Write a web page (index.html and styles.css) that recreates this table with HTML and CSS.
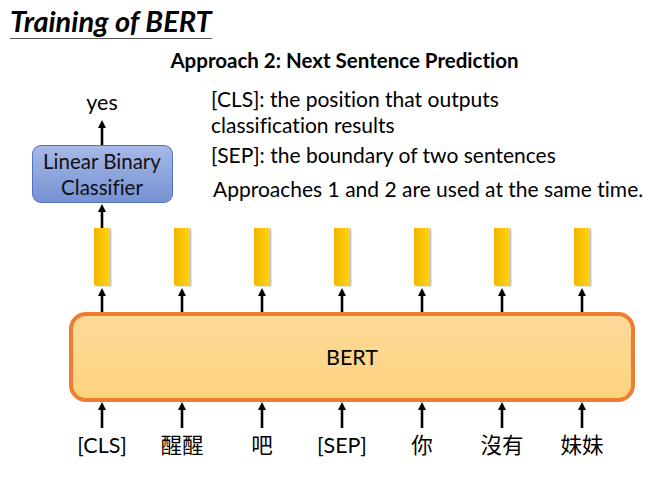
FILE: index.html
```html
<!DOCTYPE html>
<html>
<head>
<meta charset="utf-8">
<link rel="stylesheet" href="styles.css">
</head>
<body>
<div class="page">
  <div class="title"><span>Training of BERT</span></div>
  <div class="subtitle">Approach 2: Next Sentence Prediction</div>
  <div class="top">
    <div class="head">
      <div class="yes">yes</div>
      <svg class="arrow a-up" width="10" height="25" viewBox="0 0 10 25"><line x1="5" y1="6" x2="5" y2="25"/><polygon points="5,0 9,8 1,8"/></svg>
      <div class="clf">Linear Binary<br>Classifier</div>
      <svg class="arrow a-mid" width="10" height="25" viewBox="0 0 10 25"><line x1="5" y1="6" x2="5" y2="25"/><polygon points="5,1 9,9 1,9"/></svg>
    </div>
    <div class="notes">
      <p class="n1">[CLS]: the position that outputs<br>classification results</p>
      <p class="n2">[SEP]: the boundary of two sentences</p>
      <p class="n3">Approaches 1 and 2 are used at the same time.</p>
    </div>
  </div>
  <div class="cols outs">
    <div class="col"><div class="bar"></div><svg class="arrow" width="10" height="27" viewBox="0 0 10 27"><line x1="5" y1="8" x2="5" y2="27"/><polygon points="5,3 9,11 1,11"/></svg></div>
    <div class="col"><div class="bar"></div><svg class="arrow" width="10" height="27" viewBox="0 0 10 27"><line x1="5" y1="8" x2="5" y2="27"/><polygon points="5,3 9,11 1,11"/></svg></div>
    <div class="col"><div class="bar"></div><svg class="arrow" width="10" height="27" viewBox="0 0 10 27"><line x1="5" y1="8" x2="5" y2="27"/><polygon points="5,3 9,11 1,11"/></svg></div>
    <div class="col"><div class="bar"></div><svg class="arrow" width="10" height="27" viewBox="0 0 10 27"><line x1="5" y1="8" x2="5" y2="27"/><polygon points="5,3 9,11 1,11"/></svg></div>
    <div class="col"><div class="bar"></div><svg class="arrow" width="10" height="27" viewBox="0 0 10 27"><line x1="5" y1="8" x2="5" y2="27"/><polygon points="5,3 9,11 1,11"/></svg></div>
    <div class="col"><div class="bar"></div><svg class="arrow" width="10" height="27" viewBox="0 0 10 27"><line x1="5" y1="8" x2="5" y2="27"/><polygon points="5,3 9,11 1,11"/></svg></div>
    <div class="col"><div class="bar"></div><svg class="arrow" width="10" height="27" viewBox="0 0 10 27"><line x1="5" y1="8" x2="5" y2="27"/><polygon points="5,3 9,11 1,11"/></svg></div>
  </div>
  <div class="bert">BERT</div>
  <div class="cols ins">
    <div class="col"><svg class="arrow" width="10" height="26" viewBox="0 0 10 26"><line x1="5" y1="5" x2="5" y2="26"/><polygon points="5,0 9,8 1,8"/></svg><span class="tok">[CLS]</span></div>
    <div class="col"><svg class="arrow" width="10" height="26" viewBox="0 0 10 26"><line x1="5" y1="5" x2="5" y2="26"/><polygon points="5,0 9,8 1,8"/></svg><span class="tok">醒醒</span></div>
    <div class="col"><svg class="arrow" width="10" height="26" viewBox="0 0 10 26"><line x1="5" y1="5" x2="5" y2="26"/><polygon points="5,0 9,8 1,8"/></svg><span class="tok">吧</span></div>
    <div class="col"><svg class="arrow" width="10" height="26" viewBox="0 0 10 26"><line x1="5" y1="5" x2="5" y2="26"/><polygon points="5,0 9,8 1,8"/></svg><span class="tok">[SEP]</span></div>
    <div class="col"><svg class="arrow" width="10" height="26" viewBox="0 0 10 26"><line x1="5" y1="5" x2="5" y2="26"/><polygon points="5,0 9,8 1,8"/></svg><span class="tok">你</span></div>
    <div class="col"><svg class="arrow" width="10" height="26" viewBox="0 0 10 26"><line x1="5" y1="5" x2="5" y2="26"/><polygon points="5,0 9,8 1,8"/></svg><span class="tok">沒有</span></div>
    <div class="col"><svg class="arrow" width="10" height="26" viewBox="0 0 10 26"><line x1="5" y1="5" x2="5" y2="26"/><polygon points="5,0 9,8 1,8"/></svg><span class="tok">妹妹</span></div>
  </div>
</div>
</body>
</html>
```
FILE: styles.css
```css
html, body {
  margin: 0;
  padding: 0;
  background: #ffffff;
}
body {
  font-family: Lato, "Noto Sans CJK TC", sans-serif;
  font-variant-ligatures: none;
  font-feature-settings: "liga" 0, "clig" 0, "dlig" 0;
  color: #000000;
  width: 653px;
  height: 489px;
  overflow: hidden;
}
.page {
  width: 653px;
}
.title {
  padding-left: 10px;
  height: 39px;
}
.title span {
  display: inline-block;
  padding-top: 4px;
  font-size: 29px;
  line-height: 34px;
  font-weight: 700;
  font-style: italic;
  border-bottom: 1px solid #555555;
}
.subtitle {
  margin-top: 9px;
  font-size: 20.5px;
  line-height: 24px;
  font-weight: 700;
  text-align: center;
  padding-left: 36px;
}
.top {
  display: flex;
  align-items: flex-start;
}
.head {
  margin-left: 32px;
  width: 140px;
  display: flex;
  flex-direction: column;
  align-items: center;
}
.yes {
  padding-top: 18px;
  font-size: 21.5px;
  line-height: 24px;
}
.arrow line {
  stroke: #000000;
  stroke-width: 2.6;
}
.arrow polygon {
  fill: #000000;
}
.a-up {
  margin-top: 6px;
  display: block;
}
.a-mid {
  display: block;
}
.clf {
  box-sizing: border-box;
  width: 141px;
  height: 58px;
  border: 1px solid #4f74c0;
  border-radius: 9px;
  background: linear-gradient(to bottom, #a7b8e6, #7592d4);
  font-size: 20.5px;
  line-height: 26px;
  text-align: center;
  padding-top: 2px;
  color: #111111;
}
.notes {
  margin-left: 39px;
  padding-top: 14px;
  font-size: 21px;
  line-height: 26px;
}
.notes p {
  margin: 0;
}
.n2 {
  margin-top: 4px !important;
}
.n3 {
  margin-top: 8px !important;
  padding-left: 2px;
}
.cols {
  display: flex;
  margin-left: 62px;
}
.col {
  width: 80px;
  display: flex;
  flex-direction: column;
  align-items: center;
}
.col .arrow {
  display: block;
}
.bar {
  width: 16px;
  height: 57px;
  background: linear-gradient(to right, #ecb600, #ffc800 60%, #ffd424);
  box-shadow: 1px 1px 1.5px rgba(0, 0, 0, 0.35);
}
.bert {
  box-sizing: border-box;
  margin-left: 69px;
  width: 566px;
  height: 90px;
  border: 4px solid #ed7d31;
  border-radius: 17px;
  background: linear-gradient(to bottom, #fdda9a, #fdd37c);
  font-size: 21.5px;
  line-height: 82px;
  text-align: center;
}
.tok {
  margin-top: 5px;
  font-size: 21.5px;
  line-height: 24px;
  white-space: nowrap;
}
```
